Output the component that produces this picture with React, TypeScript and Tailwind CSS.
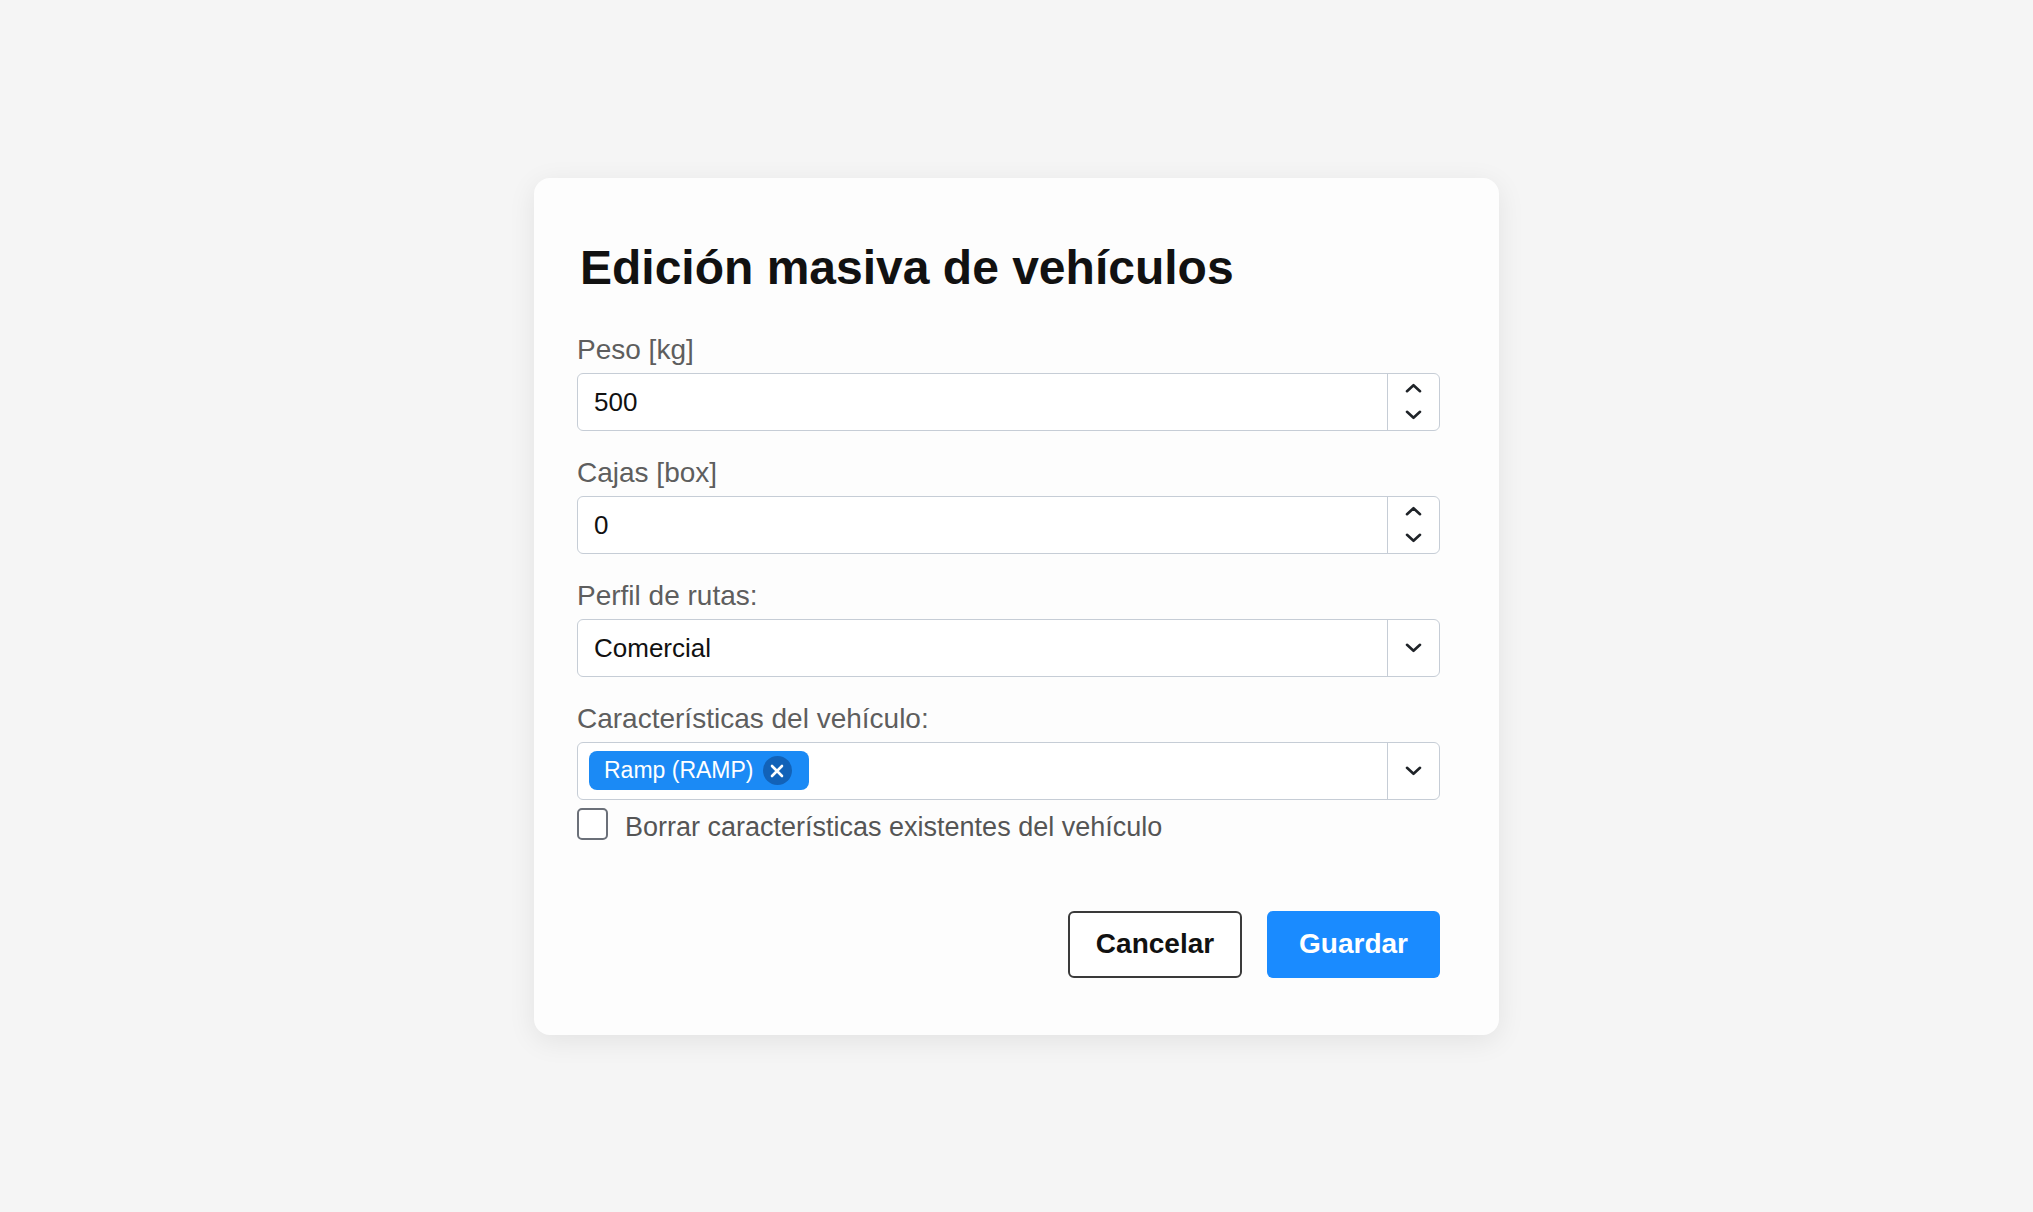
import React from "react";

const font = { fontFamily: '"Liberation Sans", Arial, Helvetica, sans-serif' };

function ChevronUp() {
  return (
    <svg width="17" height="10" viewBox="0 0 17 10" fill="none">
      <polyline points="2,8.2 8.5,2.2 15,8.2" stroke="#1f2328" strokeWidth="2.6" strokeLinecap="round" strokeLinejoin="round" />
    </svg>
  );
}

function ChevronDown() {
  return (
    <svg width="17" height="10" viewBox="0 0 17 10" fill="none">
      <polyline points="2,1.8 8.5,7.8 15,1.8" stroke="#1f2328" strokeWidth="2.6" strokeLinecap="round" strokeLinejoin="round" />
    </svg>
  );
}

function Label({ children }: { children: React.ReactNode }) {
  return <div className="text-[28px] leading-[32px] text-[#5e5e5e] mb-[7px]">{children}</div>;
}

function NumberField({ value }: { value: string }) {
  return (
    <div className="flex h-[58px] w-full rounded-[6px] border border-[#c6cdd6] bg-white">
      <div className="flex flex-1 items-center pl-[16px] pt-[2px] text-[26px] text-[#111]">{value}</div>
      <div className="flex w-[52px] flex-col items-center justify-center gap-[17px] border-l border-[#c6cdd6]">
        <ChevronUp />
        <ChevronDown />
      </div>
    </div>
  );
}

function SelectField({ children }: { children: React.ReactNode }) {
  return (
    <div className="flex h-[58px] w-full rounded-[6px] border border-[#c6cdd6] bg-white">
      <div className="flex flex-1 items-center">{children}</div>
      <div className="flex w-[52px] items-center justify-center border-l border-[#c6cdd6]">
        <ChevronDown />
      </div>
    </div>
  );
}

export default function App() {
  return (
    <div className="flex min-h-screen w-full items-center justify-center bg-[#f5f5f5]" style={font}>
      <div className="w-[965px] rounded-[16px] bg-[#fdfdfd] pl-[43px] pr-[59px] pt-[62px] pb-[57px] shadow-[0_6px_28px_rgba(0,0,0,0.08)]">
        <h1 className="text-[48px] font-bold leading-[56px] text-[#111] pl-[3px]">Edición masiva de vehículos</h1>

        <div className="mt-[38px]">
          <Label>Peso [kg]</Label>
          <NumberField value="500" />
        </div>

        <div className="mt-[26px]">
          <Label>Cajas [box]</Label>
          <NumberField value="0" />
        </div>

        <div className="mt-[26px]">
          <Label>Perfil de rutas:</Label>
          <SelectField>
            <span className="pl-[16px] pt-[2px] text-[26px] text-[#111]">Comercial</span>
          </SelectField>
        </div>

        <div className="mt-[26px]">
          <Label>Características del vehículo:</Label>
          <SelectField>
            <span className="ml-[11px] flex h-[39px] items-center rounded-[8px] bg-[#1b8af5] pl-[15px] pr-[17px] text-[23px] text-white">
              Ramp (RAMP)
              <span className="ml-[9px] flex h-[29px] w-[29px] items-center justify-center rounded-full bg-[#1262b8]">
                <svg width="14" height="14" viewBox="0 0 14 14" fill="none">
                  <path d="M2 2 L12 12 M12 2 L2 12" stroke="white" strokeWidth="2.6" strokeLinecap="round" />
                </svg>
              </span>
            </span>
          </SelectField>
        </div>

        <div className="mt-[8px] flex h-[32px] items-start gap-[17px]">
          <div className="h-[32px] w-[31px] rounded-[5px] border-2 border-[#6b7079] bg-white" />
          <span className="pt-[6px] text-[27px] leading-[26px] text-[#555]">Borrar características existentes del vehículo</span>
        </div>

        <div className="mt-[71px] flex justify-end gap-[25px]">
          <button className="h-[67px] w-[174px] rounded-[6px] border-2 border-[#3a3a3a] bg-white text-[28px] font-bold text-[#111]">
            Cancelar
          </button>
          <button className="h-[67px] w-[173px] rounded-[6px] bg-[#1a8bff] text-[28px] font-bold text-white">
            Guardar
          </button>
        </div>
      </div>
    </div>
  );
}
